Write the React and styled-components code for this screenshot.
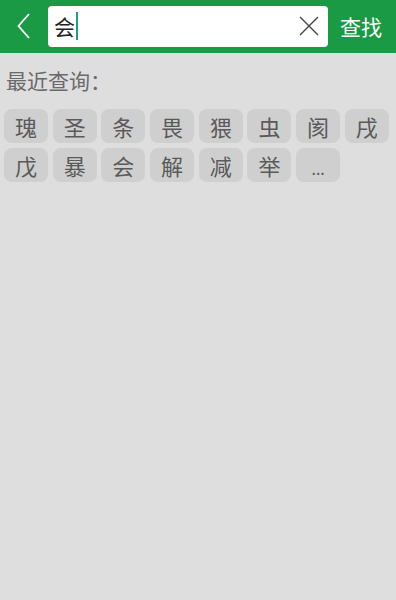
import styled, { createGlobalStyle } from "styled-components";

const GlobalStyle = createGlobalStyle`
  html, body {
    margin: 0;
    padding: 0;
    background: #dedede;
  }
  body {
    font-family: "Noto Sans CJK SC", "Noto Sans", sans-serif;
  }
`;

const Page = styled.div`
  width: 396px;
  height: 600px;
  background: #dedede;
  display: flex;
  flex-direction: column;
`;

const Header = styled.header`
  height: 53px;
  background: #1b9a45;
  display: flex;
  align-items: center;
  padding: 0 0 1px 0;
  box-sizing: border-box;
`;

const BackButton = styled.button`
  width: 48px;
  height: 53px;
  border: none;
  background: transparent;
  display: flex;
  align-items: center;
  justify-content: center;
  padding: 0;
`;

const SearchBox = styled.div`
  width: 280px;
  height: 41px;
  background: #fff;
  border-radius: 4px;
  display: flex;
  align-items: center;
  padding: 0 6px 0 6px;
  box-sizing: border-box;
`;

const Query = styled.span`
  font-size: 21px;
  color: #222;
  line-height: 1;
`;

const Caret = styled.span`
  width: 2px;
  height: 28px;
  background: #1aa08a;
  margin-left: 1px;
`;

const ClearButton = styled.button`
  margin-left: auto;
  border: none;
  background: transparent;
  padding: 0;
  width: 26px;
  height: 26px;
  display: flex;
  align-items: center;
  justify-content: center;
`;

const FindButton = styled.span`
  flex: 1;
  text-align: center;
  color: #fff;
  font-size: 21px;
  padding-right: 2px;
`;

const Content = styled.main`
  padding: 12px 0 0 4px;
`;

const Title = styled.div`
  font-size: 21px;
  color: #6a6a6a;
  padding-left: 2px;
  line-height: 30px;
  margin-bottom: 14px;
`;

const Chips = styled.div`
  display: grid;
  grid-template-columns: repeat(8, 44px);
  column-gap: 4.7px;
  row-gap: 5px;
`;

const Chip = styled.div`
  height: 34px;
  border-radius: 8px;
  background: #cfcfcf;
  color: #5a5a5a;
  font-size: ${(p) => (p.$small ? "16px" : "22px")};
  display: flex;
  align-items: ${(p) => (p.$small ? "flex-end" : "center")};
  padding-bottom: ${(p) => (p.$small ? "6px" : "0")};
  box-sizing: border-box;
  justify-content: center;
  line-height: 1;
`;

const history = ["瑰", "圣", "条", "畏", "猥", "虫", "阂", "戌", "戊", "暴", "会", "解", "减", "举"];

export default function App() {
  return (
    <Page>
      <GlobalStyle />
      <Header>
        <BackButton>
          <svg width="16" height="26" viewBox="0 0 16 26">
            <path d="M13 1 L2.5 13 L13 25" stroke="#fff" strokeWidth="1.8" fill="none" />
          </svg>
        </BackButton>
        <SearchBox>
          <Query>会</Query>
          <Caret />
          <ClearButton>
            <svg width="20" height="20" viewBox="0 0 20 20">
              <path d="M1 1 L19 19 M19 1 L1 19" stroke="#444" strokeWidth="1.4" />
            </svg>
          </ClearButton>
        </SearchBox>
        <FindButton>查找</FindButton>
      </Header>
      <Content>
        <Title>最近查询：</Title>
        <Chips>
          {history.map((c, i) => (
            <Chip key={i}>{c}</Chip>
          ))}
          <Chip $small>...</Chip>
        </Chips>
      </Content>
    </Page>
  );
}
